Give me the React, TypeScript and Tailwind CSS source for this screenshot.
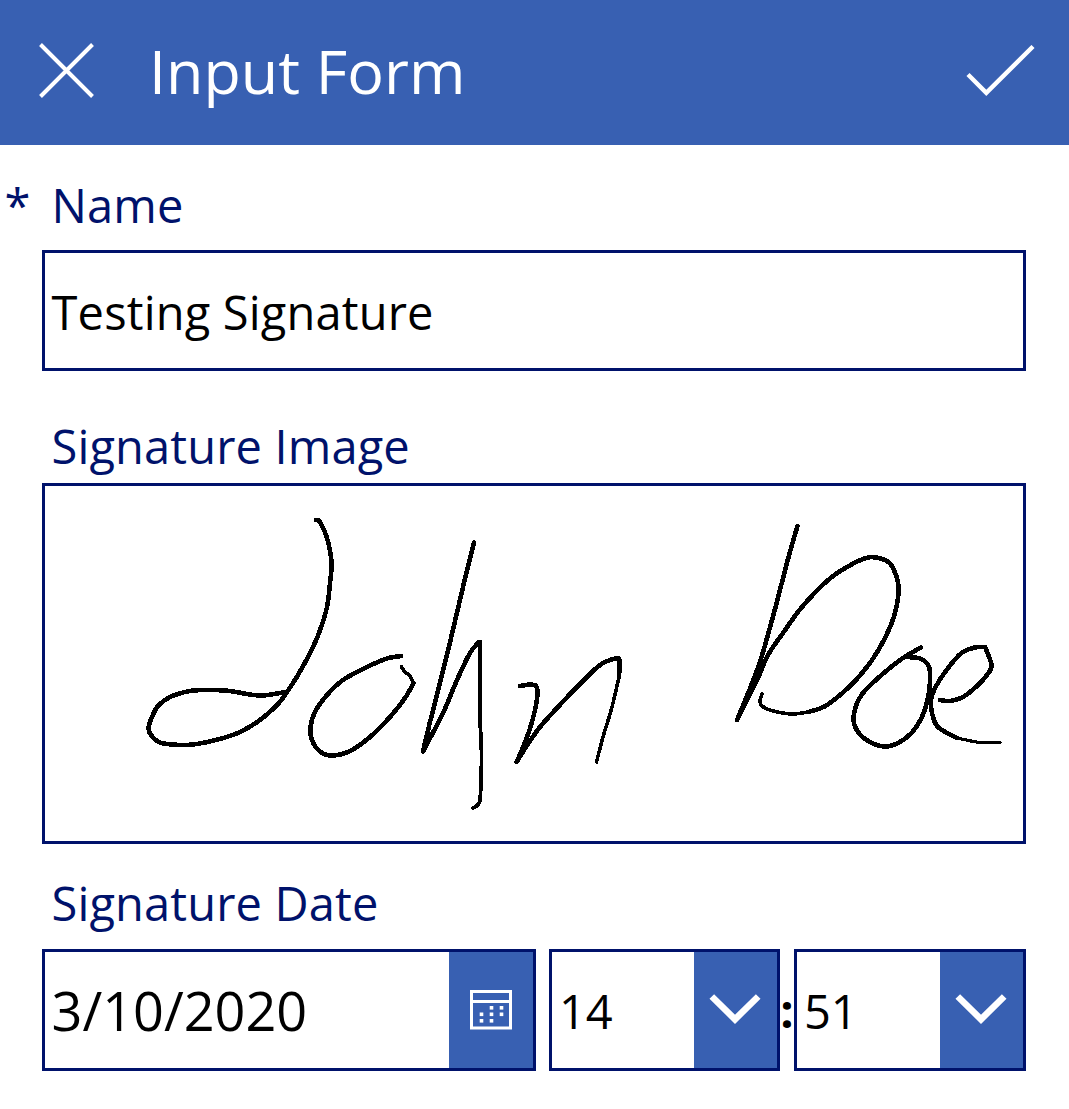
import type { ReactNode } from "react";

type Point = [number, number];

/** Catmull-Rom spline through the pen's sample points. */
function smooth(points: Point[]): string {
  let d = `M${points[0][0]} ${points[0][1]}`;
  for (let i = 0; i < points.length - 1; i++) {
    const a = points[i - 1] ?? points[i];
    const b = points[i];
    const c = points[i + 1];
    const e = points[i + 2] ?? c;
    d += `C${b[0] + (c[0] - a[0]) / 6} ${b[1] + (c[1] - a[1]) / 6} ${c[0] - (e[0] - b[0]) / 6} ${c[1] - (e[1] - b[1]) / 6} ${c[0]} ${c[1]}`;
  }
  return d;
}

const strokes: { width: number; points: Point[] }[] = [
  { width: 4.6, points: [[316, 520], [320, 522], [327, 538], [331.5, 562], [330, 583], [327, 607], [319, 633], [310, 653], [298, 675], [285, 695], [277, 705], [260, 720], [240, 732], [220, 739], [197, 744], [180, 745], [160, 742.5], [151, 735], [148.5, 728], [152, 717], [158, 706], [170, 697], [190, 691], [210, 690], [230, 691], [247, 694], [263, 695.5], [286, 692]] },
  { width: 4.6, points: [[401, 656], [387, 658.5], [367, 667], [343, 680], [327, 695], [315, 712], [310.5, 727], [312, 740], [320, 751.5], [332, 755.5], [350, 751], [370, 737], [390, 717], [405, 698], [413.5, 683]] },
  { width: 3.6, points: [[413.5, 683], [410, 676], [405, 672], [401.5, 667]] },
  { width: 4.6, points: [[474, 542.5], [463, 587], [451.5, 636], [440, 683], [430, 722], [423, 751.5]] },
  { width: 4.6, points: [[423, 751.5], [443, 713], [457, 680], [470, 653], [479, 642]] },
  { width: 4.6, points: [[480, 642], [480, 680], [480, 720]] },
  { width: 3.8, points: [[480, 720], [481.5, 753], [481, 780], [479.5, 802], [473, 808]] },
  { width: 4.6, points: [[520, 686], [530, 684.5], [536, 686], [537.5, 693], [535, 710], [529.5, 730], [522, 750], [516.5, 762]] },
  { width: 4.6, points: [[516.5, 762], [528, 744], [540, 727], [557, 708], [577, 687], [600, 665], [616, 658.5], [619.5, 661], [619, 677]] },
  { width: 3.6, points: [[619, 677], [612, 707], [603, 737], [596.5, 762]] },
  { width: 4.6, points: [[797.5, 526], [788, 559], [775, 609], [761.5, 657], [751, 686], [737, 720]] },
  { width: 4.6, points: [[737, 720], [757, 680], [768, 655], [783, 633], [802, 607], [827, 581], [847, 567], [868, 557.5], [885, 560], [893, 568], [898.5, 587], [895, 613], [885, 638], [872, 660], [853, 683], [827, 705], [810, 711.5]] },
  { width: 3.6, points: [[810, 711.5], [793, 714], [773, 711], [762, 706], [760, 701], [762, 694]] },
  { width: 4.6, points: [[921, 647.5], [903, 658], [881.5, 675], [861.5, 695], [853.5, 717], [858, 732], [870, 742], [885, 746.5], [898, 743], [911.5, 733], [921.5, 718], [928, 698], [930, 680], [929, 667], [921.5, 659], [908, 657]] },
  { width: 4.6, points: [[940, 700], [950, 701], [963, 697], [977, 686], [987, 675], [991.5, 665], [985, 647]] },
  { width: 4.6, points: [[985, 647], [975, 647.5], [961.5, 653], [946.5, 670], [935, 688], [931, 700], [932, 713], [938, 727], [957, 738]] },
  { width: 3.2, points: [[957, 738], [980, 742.5], [1000, 742.5]] },
];

function Signature() {
  return (
    <svg viewBox="45 486 978 355" className="block h-full w-full" fill="none" stroke="#000" strokeLinejoin="round" strokeLinecap="round" shapeRendering="crispEdges">
      {strokes.map((s, i) => (
        <path key={i} d={smooth(s.points)} strokeWidth={s.width} />
      ))}
    </svg>
  );
}

function Label({ children }: { children: ReactNode }) {
  return (
    <div className="pl-[51.5px] text-[47px] leading-[66px] tracking-[0.15px] whitespace-nowrap text-[#00126b]">
      {children}
    </div>
  );
}

function Chevron() {
  return (
    <svg viewBox="0 0 52 32" className="h-8 w-[52px]" fill="none" stroke="#fff" strokeWidth="6.6">
      <path d="M2.8 3.5 26 26.3 49.2 3.5" />
    </svg>
  );
}

function CalendarIcon() {
  const dots: Point[] = [[20, 16], [30, 16], [10, 22.5], [20, 22.5], [30, 22.5], [10, 29], [20, 29]];
  return (
    <svg viewBox="0 0 42 40" className="h-10 w-[42px]" fill="none">
      <path d="M1.5 1.5H40.5V38H1.5Z M1.5 11.5H40.5" stroke="#fff" strokeWidth="3" />
      {dots.map(([x, y]) => (
        <rect key={`${x}-${y}`} x={x - 0.3} y={y} width="3.6" height="3.6" fill="#fff" />
      ))}
    </svg>
  );
}

function Picker({ value }: { value: string }) {
  return (
    <div className="flex h-full w-full items-stretch border-[3px] border-[#00126b]">
      <div className="flex-1 pl-[7px] text-[47px] leading-[119px]">{value}</div>
      <button className="flex w-[83.5px] items-center justify-center bg-[#3860b2] pb-[2px]">
        <Chevron />
      </button>
    </div>
  );
}

export default function App() {
  return (
    <div className="h-[1109px] w-[1069px] overflow-hidden bg-white font-['Open_Sans',sans-serif] text-black">
      <header className="flex h-[145px] items-center bg-[#3860b2] pr-[34px] pl-[39px] text-white">
        <svg viewBox="0 0 55 55" className="mb-[5px] size-[55px]" fill="none" stroke="#fff" strokeWidth="4">
          <path d="M1.5 1.5 53.5 53.5 M53.5 1.5 1.5 53.5" />
        </svg>
        <h1 className="mb-[4px] ml-[55px] flex-1 text-[61px] leading-[139px]">Input Form</h1>
        <svg viewBox="0 0 69 52" className="mb-[3px] h-[52px] w-[69px]" fill="none" stroke="#fff" strokeWidth="4.4">
          <path d="M2 29.5 20.3 47.8 67 1.5" />
        </svg>
      </header>

      <div className="relative pt-[27px]">
        <span className="absolute left-[4.5px] text-[47px] leading-[66px] text-[#00126b]">*</span>
        <Label>Name</Label>
      </div>
      <div className="mt-[12px] ml-[42px] h-[121px] w-[984px] border-[3px] border-[#00126b] pl-[6.5px] text-[47px] leading-[119px] tracking-[0.18px]">
        Testing Signature
      </div>

      <div className="pt-[42px]">
        <Label>Signature Image</Label>
      </div>
      <div className="mt-[4px] ml-[42px] h-[361px] w-[984px] border-[3px] border-[#00126b]">
        <Signature />
      </div>

      <div className="pt-[26px]">
        <Label>Signature Date</Label>
      </div>
      <div className="mt-[13px] ml-[42px] flex h-[122px] w-[984px]">
        <div className="flex w-[494px] border-[3px] border-[#00126b]">
          <div className="flex-1 pl-[6.5px] text-[54px] leading-[116px]">3/10/2020</div>
          <button className="flex w-[84px] items-center justify-center bg-[#3860b2]">
            <CalendarIcon />
          </button>
        </div>
        <div className="ml-[13px] w-[231px]">
          <Picker value="14" />
        </div>
        <div className="flex w-[14px] justify-center text-[47px] leading-[123px] font-bold">:</div>
        <div className="w-[232px]">
          <Picker value="51" />
        </div>
      </div>
    </div>
  );
}
